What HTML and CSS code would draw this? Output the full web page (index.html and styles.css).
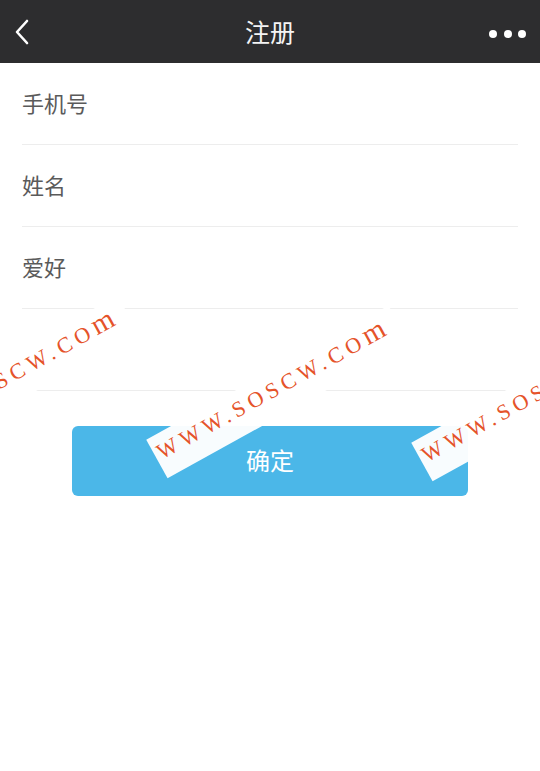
FILE: index.html
```html
<!DOCTYPE html>
<html lang="zh">
<head>
<meta charset="utf-8">
<title>注册</title>
<link rel="stylesheet" href="styles.css">
</head>
<body>
<div class="page">
  <header class="nav">
    <span class="back">
      <svg width="16" height="26" viewBox="0 0 16 26"><path d="M13 2 L3 13 L13 24" fill="none" stroke="#fff" stroke-width="2.6" stroke-linecap="round" stroke-linejoin="round"/></svg>
    </span>
    <h1 class="title">注册</h1>
    <span class="more">
      <svg width="38" height="10" viewBox="0 0 38 10"><circle cx="5" cy="5" r="4" fill="#fff"/><circle cx="20" cy="5" r="4" fill="#fff"/><circle cx="34" cy="5" r="4" fill="#fff"/></svg>
    </span>
  </header>
  <main class="form">
    <div class="row">手机号</div>
    <div class="row">姓名</div>
    <div class="row">爱好</div>
    <div class="row"></div>
    <div class="actions">
      <button class="btn">确定</button>
    </div>
  </main>
  <div class="wm wm1">www.soscw.co<span class="wm-m">m</span></div>
  <div class="wm wm2">www.soscw.co<span class="wm-m">m</span></div>
  <div class="wm wm3">www.soscw.co<span class="wm-m">m</span></div>
</div>
</body>
</html>
```
FILE: styles.css
```css
html, body {
  margin: 0;
  padding: 0;
  background: #fff;
}
.page {
  position: relative;
  width: 540px;
  height: 771px;
  overflow: hidden;
  font-family: "Noto Sans CJK SC", "Noto Sans", sans-serif;
}
.nav {
  height: 63px;
  background: #2d2d2f;
  display: flex;
  align-items: center;
  justify-content: space-between;
  padding: 0 14px 0 14px;
  box-sizing: border-box;
}
.back, .more {
  width: 40px;
  display: flex;
  align-items: center;
}
.back svg { display: block; }
.more { justify-content: flex-end; }
.more svg { display: block; margin-top: 4px; }
.title {
  margin: 0;
  font-size: 25px;
  font-weight: normal;
  color: #f4f4f4;
  line-height: 1;
}
.form {
  display: flex;
  flex-direction: column;
}
.row {
  margin: 0 22px;
  border-bottom: 1px solid #ededed;
  display: flex;
  align-items: center;
  padding-bottom: 3px;
  height: 78px;
  font-size: 22px;
  color: #5a5a5a;
}
.actions {
  padding: 35px 72px 0;
}
.btn {
  display: block;
  width: 100%;
  height: 70px;
  border: none;
  border-radius: 6px;
  background: #4bb7e8;
  color: #fff;
  font-family: "Noto Sans CJK SC", sans-serif;
  font-size: 24px;
  line-height: 1;
  padding: 0 0 2px;
}
.wm {
  position: absolute;
  height: 44px;
  line-height: 30px;
  padding: 0 10px 0 4px;
  background: rgba(255, 255, 255, 0.96);
  color: #e5532a;
  font-family: "Liberation Serif", serif;
  font-size: 22px;
  text-transform: uppercase;
  letter-spacing: 5px;
  white-space: nowrap;
  transform-origin: 4px 15px;
  transform: rotate(-29deg);
}
.wm-m {
  text-transform: none;
  font-size: 29px;
}
.wm1 { left: -118px; top: 426px; }
.wm2 { left: 153px; top: 436px; }
.wm3 { left: 418px; top: 439px; }
```
